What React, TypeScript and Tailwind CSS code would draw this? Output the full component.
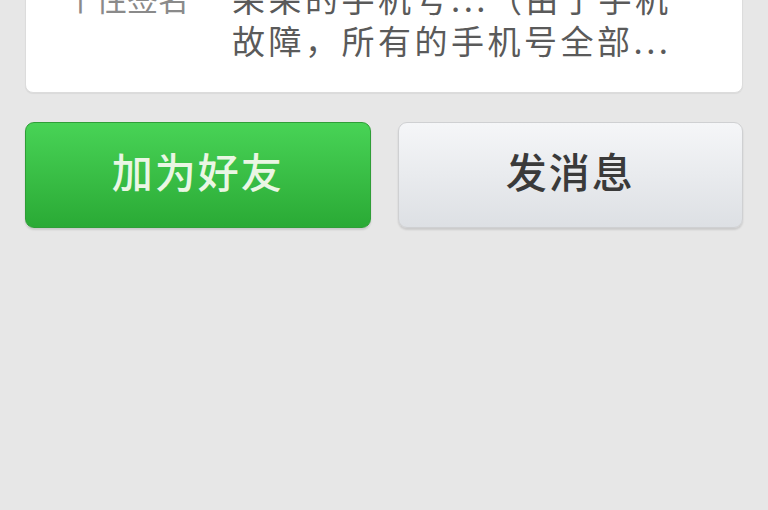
export default function App() {
  return (
    <div
      className="h-[510px] w-[768px] overflow-hidden bg-[#e7e7e7]"
      style={{ fontFamily: '"Noto Sans CJK SC", "Noto Sans", sans-serif' }}
    >
      {/* profile card, top clipped */}
      <div className="mx-[25px] mt-[-44px] rounded-[8px] border border-[#dcdcdc] bg-white pb-[31px] pt-[20px] shadow-[0_1px_1px_rgba(0,0,0,0.06)]">
        <div className="flex">
          <div className="w-[206px] shrink-0 pl-[39px] text-[31px] leading-[42px] text-[#8a8a8a]">个性签名</div>
          <div className="w-[480px] text-[33px] leading-[42px] tracking-[3.5px] text-[#5a5a5a]">
            朵朵的手机号...（由于手机
            <br />
            故障，所有的手机号全部...
          </div>
        </div>
      </div>

      {/* action buttons */}
      <div className="mx-[25px] mt-[29px] flex gap-[27px]">
        <button className="flex h-[106px] flex-1 items-center justify-center rounded-[9px] border border-[#2f9e37] bg-gradient-to-b from-[#48d356] to-[#2aaa35] pb-[8px] text-[41px] font-medium tracking-[2px] text-[#eaf6e4] shadow-[0_2px_2px_rgba(0,0,0,0.12)]">
          加为好友
        </button>
        <button className="flex h-[106px] flex-1 items-center justify-center rounded-[9px] border border-[#cfd0d2] bg-gradient-to-b from-[#f5f6f8] to-[#dde0e4] pb-[8px] text-[41px] font-medium tracking-[2px] text-[#3a3a3a] shadow-[0_2px_2px_rgba(0,0,0,0.12)]">
          发消息
        </button>
      </div>
    </div>
  );
}
